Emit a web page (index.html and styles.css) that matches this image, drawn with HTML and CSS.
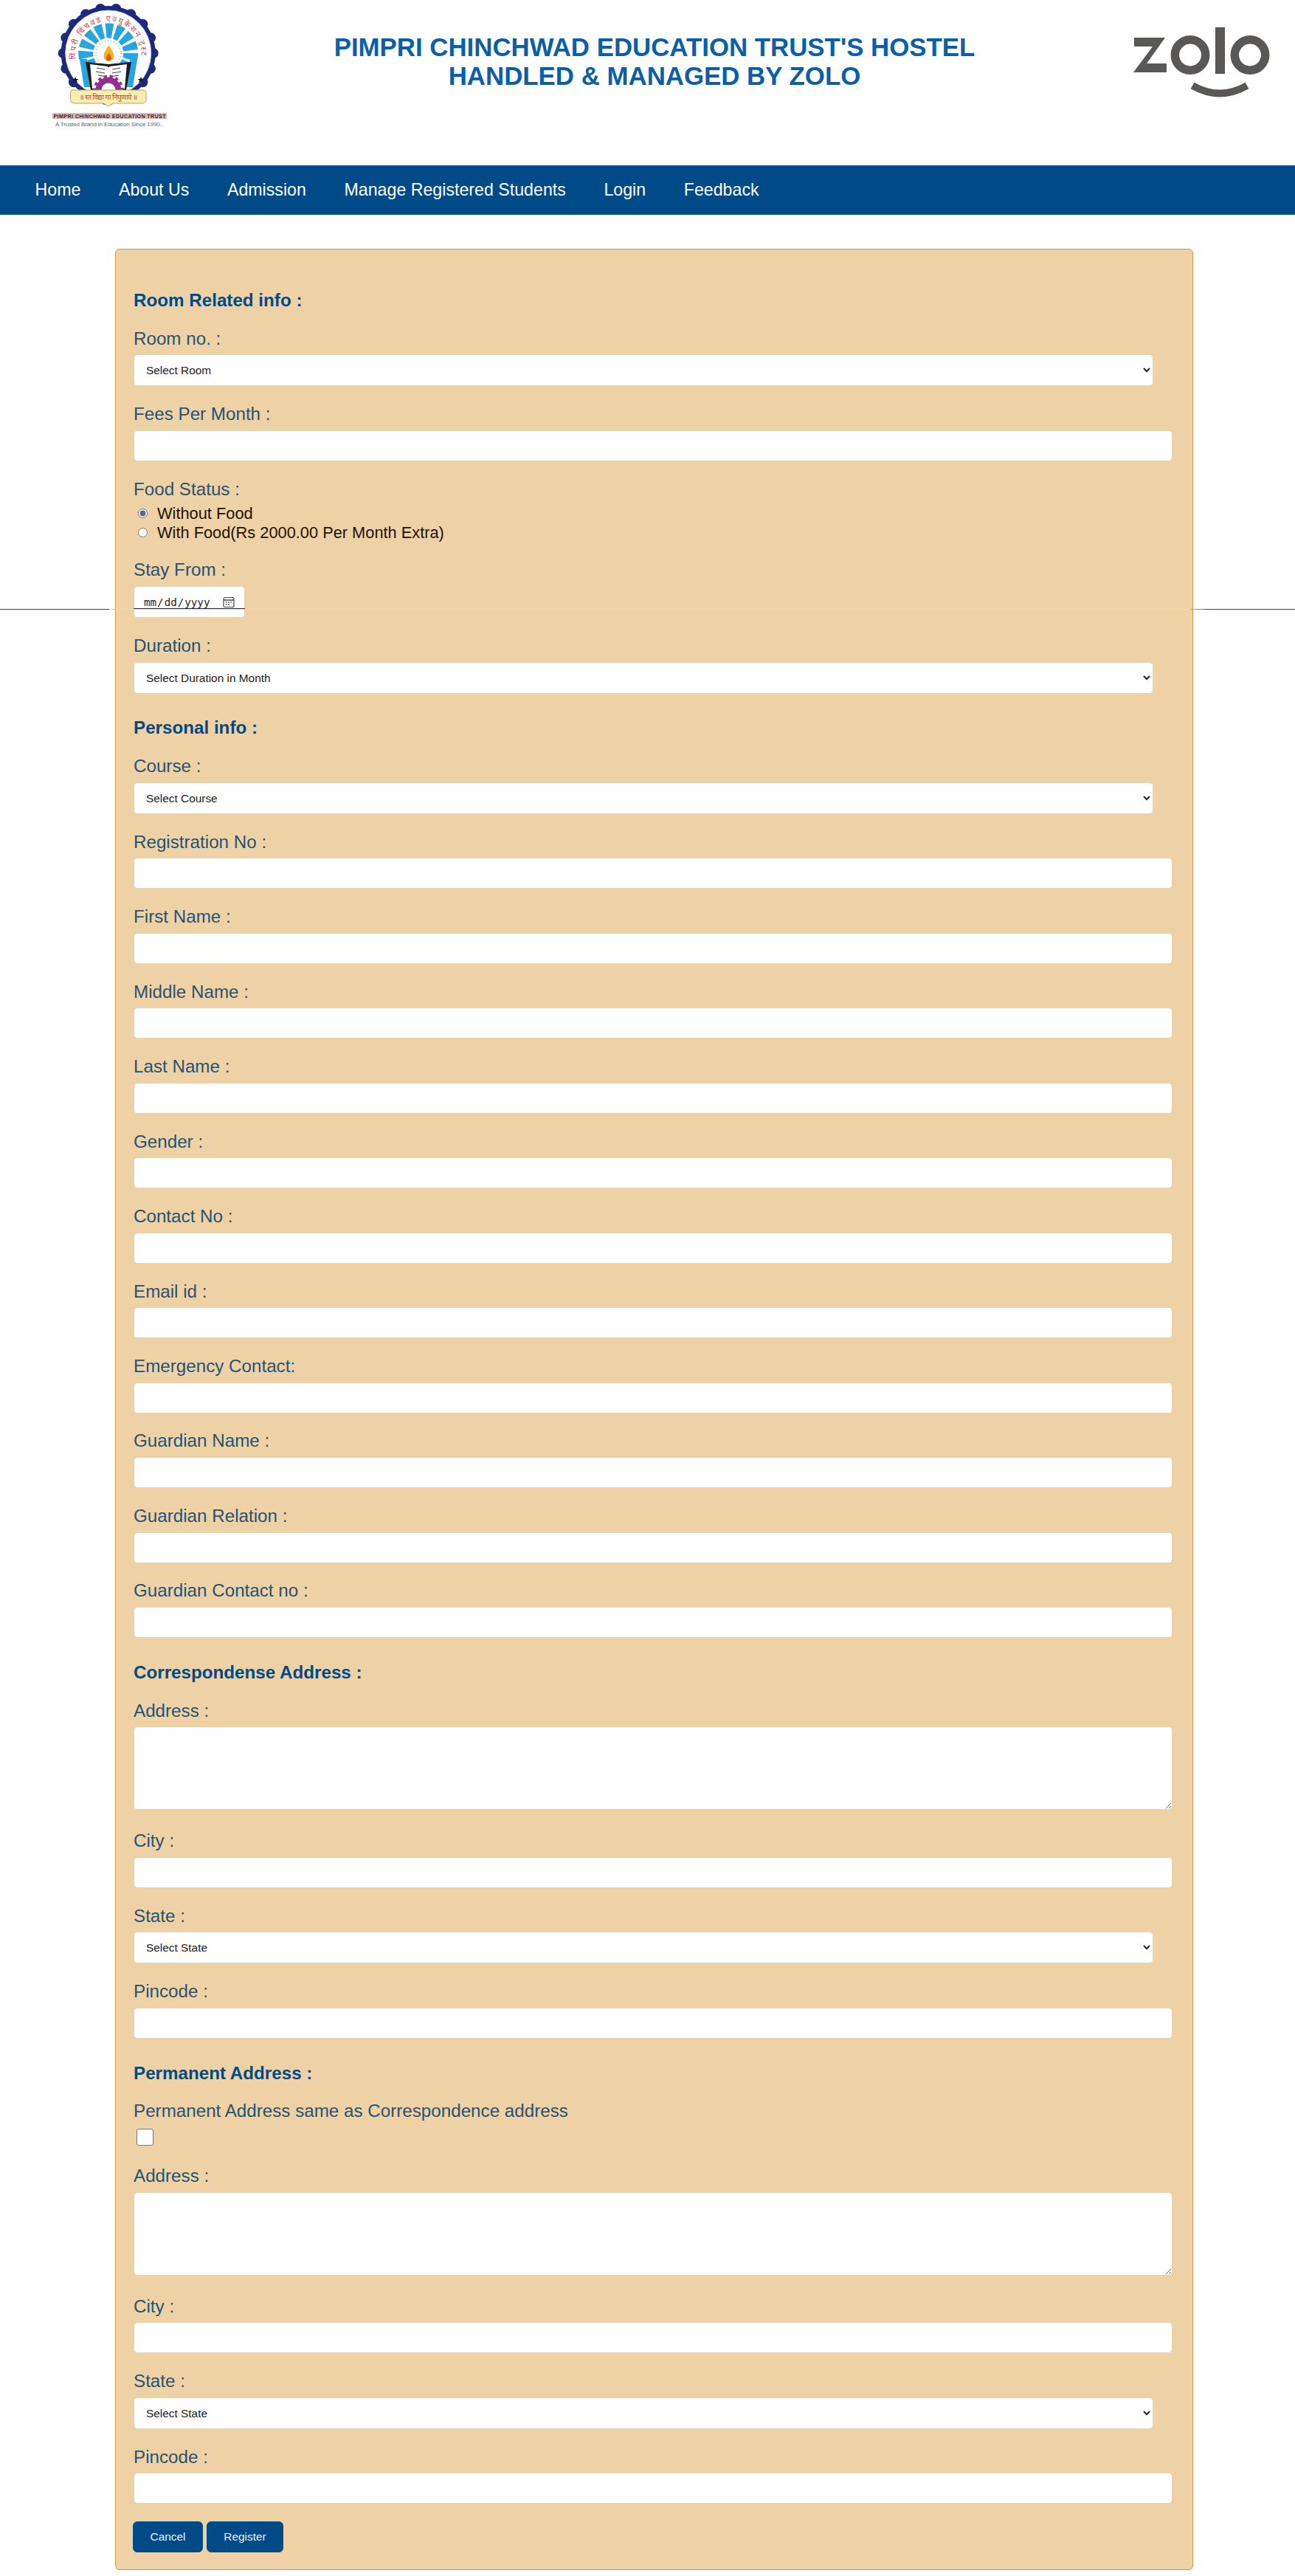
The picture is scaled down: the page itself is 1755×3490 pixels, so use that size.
FILE: index.html
```html
<!DOCTYPE html>
<html lang="en">
<head>
<meta charset="utf-8">
<title>Pimpri Chinchwad Education Trust's Hostel</title>
<link rel="stylesheet" href="styles.css">
</head>
<body>
<div class="page">
  <header class="site-header">
    <svg class="trust-logo" viewBox="66 0 164 176" width="164" height="176" aria-label="Pimpri Chinchwad Education Trust logo">
      <defs>
        <clipPath id="archClip"><rect x="66" y="0" width="164" height="124"/></clipPath>
        <clipPath id="rayClip"><rect x="100" y="20" width="94" height="68"/></clipPath>
        <path id="arcText" d="M103 80 A44.500 44.500 0 1 1 191 80"/>
      </defs>
      <g clip-path="url(#archClip)">
        <circle class="seal-fill" cx="146.700" cy="72" r="64"/>
        <circle class="seal-scallop" cx="146.700" cy="72" r="61" pathLength="360" stroke-dasharray="0 20"/>
        <circle class="seal-inner" cx="146.700" cy="72" r="58"/>
      </g>
      <text class="seal-text" font-size="10.500"><textPath href="#arcText" textLength="148">पिंपरी चिंचवड एज्युकेशन ट्रस्ट</textPath></text>
      <g clip-path="url(#rayClip)">
        <circle class="seal-rays" cx="146.700" cy="72" r="30.500" pathLength="360" stroke-dasharray="17 7"/>
      </g>
      <path class="seal-rays-fill" d="M108 80h10l5 38h-9zM186 80h-10l-5 38h9z"/>
      <circle class="seal-halo" cx="147" cy="72" r="17" pathLength="360" stroke-dasharray="3 11"/>
      <path class="seal-flame" d="M147.500 61c4 7 7 11 7 15a7 7 0 0 1-14 0c0-4 3-8 7-15z"/>
      <path class="seal-flame-core" d="M147.500 72c2 3 3.500 5 3.500 6.500a3.500 3.500 0 0 1-7 0c0-1.500 1.500-3.500 3.500-6.500z"/>
      <path class="seal-book" d="M116 84l31 3 31-3-7 38h-7l-1-33-16 2-16-2-1 33h-7z"/>
      <path class="seal-page" d="M122 87l24 3v30h-21zM172 87l-24 3v30h21z"/>
      <path class="seal-page-lines" d="M131 92l11 2M130 97l12 2M133 102l9 1.500M152 94l11-2M152 99l12-2M152 103.500l9-1.500"/>
      <circle class="seal-gear-teeth" cx="147" cy="122" r="18" pathLength="360" stroke-dasharray="13 12"/>
      <circle class="seal-gear" cx="147" cy="122" r="13.500"/>
      <path class="seal-star" d="M102 104l1.300 3h3.200l-2.500 2 1 3.200-3-1.900-3 1.900 1-3.200-2.500-2h3.200zM191 104l1.300 3h3.200l-2.500 2 1 3.200-3-1.900-3 1.900 1-3.200-2.500-2h3.200z"/>
      <path class="seal-scroll" d="M98 122h97q3 0 3 4v10q0 3-5 4h-40l-6.300 4-6.300-4h-40q-5-1-5-4v-10q0-4 3-4z"/>
      <text class="seal-motto" x="146.700" y="135" text-anchor="middle" font-size="9.500" textLength="78">॥ रत विद्या गा निपुणाये ॥</text>
      <rect class="brand-bar" x="71" y="153" width="155" height="8"/>
      <text class="brand-name" x="148.500" y="159.700" text-anchor="middle" font-size="7" textLength="152">PIMPRI CHINCHWAD EDUCATION TRUST</text>
      <text class="brand-tag" x="148" y="171" text-anchor="middle" font-size="8" textLength="146">A Trusted Brand in Education Since 1990..</text>
    </svg>
    <h1 class="site-title">PIMPRI CHINCHWAD EDUCATION TRUST'S HOSTEL<br>HANDLED &amp; MANAGED BY ZOLO</h1>
    <svg class="zolo-logo" viewBox="1530 30 200 110" width="200" height="110" aria-label="Zolo logo">
      <path class="zolo-fill" d="M1537 51h42l-25 35h27v12h-45l26-35h-25z"/>
      <circle class="zolo-ring" cx="1613" cy="74.500" r="20.700"/>
      <rect class="zolo-fill" x="1647" y="37" width="13" height="63"/>
      <circle class="zolo-ring" cx="1694" cy="74.500" r="20.700"/>
      <path class="zolo-smile" d="M1616 116q37 21 74 0"/>
    </svg>
  </header>

  <nav class="site-nav">
    <a class="nav-link" href="#">Home</a>
    <a class="nav-link" href="#">About Us</a>
    <a class="nav-link" href="#">Admission</a>
    <a class="nav-link" href="#">Manage Registered Students</a>
    <a class="nav-link" href="#">Login</a>
    <a class="nav-link" href="#">Feedback</a>
  </nav>

  <form class="panel">
    <h4 class="section-title">Room Related info :</h4>
    <div class="field"><label class="field-label">Room no. :</label>
      <select class="control control-select"><option>Select Room</option></select></div>
    <div class="field"><label class="field-label">Fees Per Month :</label>
      <input class="control" type="text"></div>
    <div class="field"><label class="field-label">Food Status :</label>
      <div class="radio-group">
        <label class="radio-line"><input class="radio" type="radio" name="food" checked>Without Food</label>
        <label class="radio-line"><input class="radio" type="radio" name="food">With Food(Rs 2000.00 Per Month Extra)</label>
      </div></div>
    <div class="field"><label class="field-label">Stay From :</label>
      <span class="date-wrap"><input class="control control-date" type="date"></span></div>
    <div class="field"><label class="field-label">Duration :</label>
      <select class="control control-select"><option>Select Duration in Month</option></select></div>

    <h4 class="section-title section-gap">Personal info :</h4>
    <div class="field"><label class="field-label">Course :</label>
      <select class="control control-select"><option>Select Course</option></select></div>
    <div class="field"><label class="field-label">Registration No :</label><input class="control" type="text"></div>
    <div class="field"><label class="field-label">First Name :</label><input class="control" type="text"></div>
    <div class="field"><label class="field-label">Middle Name :</label><input class="control" type="text"></div>
    <div class="field"><label class="field-label">Last Name :</label><input class="control" type="text"></div>
    <div class="field"><label class="field-label">Gender :</label><input class="control" type="text"></div>
    <div class="field"><label class="field-label">Contact No :</label><input class="control" type="text"></div>
    <div class="field"><label class="field-label">Email id :</label><input class="control" type="text"></div>
    <div class="field"><label class="field-label">Emergency Contact:</label><input class="control" type="text"></div>
    <div class="field"><label class="field-label">Guardian Name :</label><input class="control" type="text"></div>
    <div class="field"><label class="field-label">Guardian Relation :</label><input class="control" type="text"></div>
    <div class="field"><label class="field-label">Guardian Contact no :</label><input class="control" type="text"></div>

    <h4 class="section-title section-gap">Correspondense Address :</h4>
    <div class="field field-area"><label class="field-label">Address :</label><textarea class="control control-area"></textarea></div>
    <div class="field"><label class="field-label">City :</label><input class="control" type="text"></div>
    <div class="field"><label class="field-label">State :</label>
      <select class="control control-select"><option>Select State</option></select></div>
    <div class="field"><label class="field-label">Pincode :</label><input class="control" type="text"></div>

    <h4 class="section-title section-gap">Permanent Address :</h4>
    <div class="field field-check"><label class="field-label">Permanent Address same as Correspondence address</label>
      <input class="check" type="checkbox"></div>
    <div class="field field-area"><label class="field-label">Address :</label><textarea class="control control-area"></textarea></div>
    <div class="field"><label class="field-label">City :</label><input class="control" type="text"></div>
    <div class="field"><label class="field-label">State :</label>
      <select class="control control-select"><option>Select State</option></select></div>
    <div class="field"><label class="field-label">Pincode :</label><input class="control" type="text"></div>

    <div class="actions">
      <button class="btn btn-cancel" type="button">Cancel</button>
      <button class="btn btn-register" type="submit">Register</button>
    </div>
  </form>

  <div class="stray-rule"></div>
</div>
</body>
</html>
```

FILE: styles.css
```css
* { box-sizing: border-box; }
html, body { margin: 0; padding: 0; background: #fff; }
body { font-family: "Liberation Sans", Arial, sans-serif; }
.page { position: relative; padding-bottom: 8px; }

/* header */
.site-header { display: flex; align-items: flex-start; height: 224px; padding-left: 66px; padding-right: 25px; }
.trust-logo { display: block; flex: none; }
.zolo-logo { display: block; flex: none; margin-top: 30px; }
.site-title { flex: 1; margin: 44px 0 0 0; padding-left: 14px; font-size: 34.850px; line-height: 39px; font-weight: 700; text-align: center; color: #0b5ea8; white-space: nowrap; }

.seal-fill { fill: #1d2a7c; }
.seal-scallop { fill: none; stroke: #1d2a7c; stroke-width: 14; stroke-linecap: round; }
.seal-inner { fill: #fff; stroke: #c9cbe0; stroke-width: 1; }
.seal-text { fill: #c9453f; font-family: "Noto Sans", "Liberation Sans", sans-serif; }
.seal-rays { fill: none; stroke: #27a5de; stroke-width: 20; }
.seal-rays-fill { fill: #27a5de; }
.seal-halo { fill: none; stroke: #9aa3ad; stroke-width: 2; }
.seal-flame { fill: #f6b21b; }
.seal-flame-core { fill: #d8581c; }
.seal-book { fill: #1b1b1f; }
.seal-page { fill: #fff; }
.seal-page-lines { fill: none; stroke: #4a4a4a; stroke-width: 1.200; }
.seal-gear-teeth { fill: none; stroke: #93308f; stroke-width: 5; }
.seal-gear { fill: none; stroke: #93308f; stroke-width: 8; }
.seal-star { fill: #1a1a1a; }
.seal-scroll { fill: #f7eeb0; stroke: #a9ac62; stroke-width: 1; }
.seal-motto { fill: #c8452f; font-family: "Noto Sans", "Liberation Sans", sans-serif; }
.brand-bar { fill: #d9b8b8; }
.brand-name { fill: #3a2a2e; font-weight: 700; font-family: "Liberation Sans", sans-serif; }
.brand-tag { fill: #5a6675; font-family: "Liberation Sans", sans-serif; }

.zolo-fill { fill: #595857; }
.zolo-ring { fill: none; stroke: #595857; stroke-width: 11.500; }
.zolo-smile { fill: none; stroke: #595857; stroke-width: 10; }

/* nav */
.site-nav { display: flex; height: 67px; padding-left: 21.700px; background: #004b87; align-items: center; }
.nav-link { padding: 0 25.800px; font-size: 23.200px; color: #fff; text-decoration: none; white-space: nowrap; }

/* panel */
.panel { margin: 46px 138px 0 156px; padding: 55px 27px 23px 24px; background: #eed2a6; border: 1px solid #c79b43; border-radius: 6px; }
.section-title { margin: 0 0 24.700px; font-size: 24.200px; line-height: 28px; font-weight: 700; color: #004b87; }
.section-gap { margin-top: 32.800px; }
.field { margin-bottom: 24.800px; }
.field-area { margin-bottom: 29px; }
.field-check { margin-bottom: 27.500px; }
.field-label { display: block; margin-bottom: 8.700px; font-size: 24.200px; line-height: 26px; color: #265274; }

.control { display: block; width: 100%; height: 42px; margin: 0; padding: 0 12px; background: #fff; border: 1px solid #e4d3b9; border-radius: 5px; font-family: "Liberation Sans", Arial, sans-serif; font-size: 15.400px; color: #222; }
.control-select { width: 1382px; height: 43px; }
.control-date { width: 151px; height: 43px; font-family: "DejaVu Sans Mono", monospace; font-size: 14.200px; padding-right: 13px; }
.control-date::-webkit-calendar-picker-indicator { width: 16px; height: 16px; margin: 0; padding: 0; background: url("data:image/svg+xml,%3Csvg xmlns='http://www.w3.org/2000/svg' viewBox='0 0 16 16'%3E%3Crect x='1' y='1.500' width='14' height='13' rx='2' fill='none' stroke='%23444' stroke-width='1.200'/%3E%3Cpath d='M1 5h14' stroke='%23444' stroke-width='1.500'/%3E%3Cpath d='M4 8h1.500M7.200 8h1.500M10.400 8h1.500M4 11h1.500M7.200 11h1.500' stroke='%23444' stroke-width='1.300'/%3E%3C/svg%3E") center / contain no-repeat; }
.control-area { height: 113px; resize: vertical; }
.date-wrap { position: relative; display: block; width: 151px; }
.date-wrap::after { content: ""; position: absolute; left: 0; right: 0; top: 30px; height: 1px; background: #2b2b33; z-index: 2; }

.radio-group { margin-top: -1.700px; }
.radio-line { display: flex; align-items: center; height: 26px; font-size: 21.800px; color: #1c1208; }
.radio { width: 13px; height: 13px; margin: 0 13px 0 6px; accent-color: #5d6880; }
.check { display: block; width: 23px; height: 23px; margin: 11px 0 0 3.500px; appearance: none; background: #fff; border: 1px solid #777; border-radius: 3px; }

/* buttons */
.actions { display: flex; gap: 5px; margin: -1.500px 0 0 -1px; }
.btn { height: 42px; border: 1px solid #0a4f82; border-radius: 6px; background: #004b87; color: #e9f1f6; font-family: "Liberation Sans", Arial, sans-serif; font-size: 15.400px; }
.btn-cancel { width: 95px; }
.btn-register { width: 104px; }

/* the hairline that crosses the page behind the form in the capture */
.stray-rule { position: absolute; left: 0; right: 0; top: 825px; height: 1px; z-index: 1; pointer-events: none;
  background: linear-gradient(to right, #444 0, #444 148px, #eeee33 148px, #33dddd 156px, #f2d9ae 157px, #f2d9ae 1613px, #33dddd 1613px, #ee4444 1632px, #444 1633px, #444 100%); }
```
